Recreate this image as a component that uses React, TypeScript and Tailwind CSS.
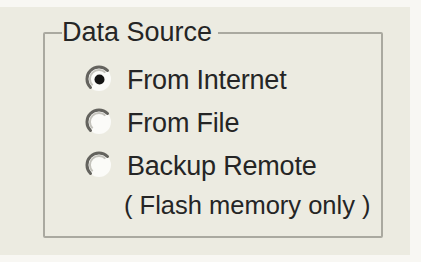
import React from 'react';

const Radio: React.FC<{ checked?: boolean }> = ({ checked }) => (
  <svg width="28" height="28" viewBox="0 0 28 28" className="shrink-0 -mt-[3px]">
    <circle cx="14" cy="14" r="12" fill="#fbfbf8" />
    <path d="M22.5 5.5 A12 12 0 0 0 5.5 22.5" stroke="#64635e" strokeWidth="3" fill="none" strokeLinecap="round" />
    <path d="M20.4 7.6 A9 9 0 0 0 7.6 20.4" stroke="#c4c3bc" strokeWidth="2" fill="none" />
    {checked && <circle cx="14.5" cy="14.5" r="5" fill="#141414" />}
  </svg>
);

const options = [
  { label: 'From Internet', checked: true },
  { label: 'From File', checked: false },
  { label: 'Backup Remote', checked: false },
];

export default function App() {
  return (
    <div
      className="w-[421px] h-[262px] bg-[#f8f7f3] overflow-hidden text-[#252525]"
      style={{ fontFamily: '"Liberation Sans", Arial, sans-serif' }}
    >
      <div className="mt-[7px] w-[410px] h-[248px] bg-[#ecebe1] pt-[10px] pl-[43px]">
        <fieldset className="w-[340px] border-2 border-[#aaa9a0] rounded-[2px] px-0 pt-[11px] pb-[13px] m-0">
          <legend className="ml-[17px] pr-[6px] pl-0 text-[27px] leading-[31px]">Data Source</legend>
          <div className="flex flex-col pl-[40px] text-[27px]">
            {options.map((o) => (
              <label key={o.label} className="flex items-center gap-[14px] h-[43px] leading-[43px]">
                <Radio checked={o.checked} />
                <span className="tracking-[-0.2px]">{o.label}</span>
              </label>
            ))}
            <div className="h-[35px] leading-[35px] pl-[39px] text-[25.5px]">( Flash memory only )</div>
          </div>
        </fieldset>
      </div>
    </div>
  );
}
